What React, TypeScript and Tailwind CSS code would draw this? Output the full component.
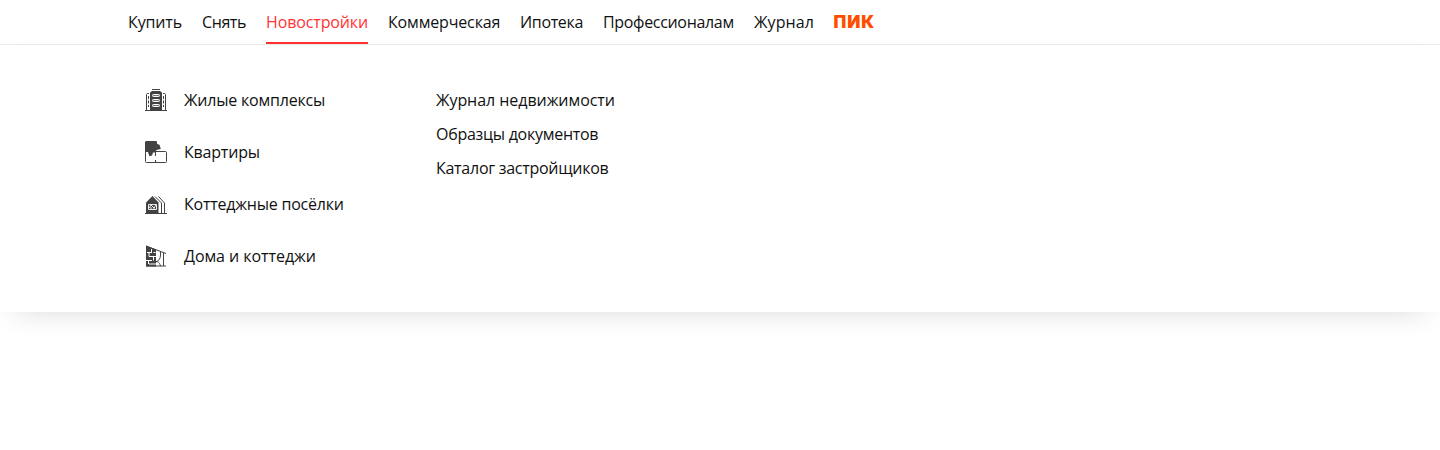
import type { ReactNode } from 'react';

const icon = 'block h-6 w-6 shrink-0';

const ComplexIcon = () => (
  <svg className={icon} viewBox="0 0 24 24" fill="none" stroke="#424242">
    <path d="M8 1.5h8" />
    <path d="M6 22V4.500l2-1.500h8l2 1.500V22z" fill="#424242" stroke="none" />
    <path d="M1 22.500h22M2.500 22V6.500q0-1 1-1H5M21.500 22V6.500q0-1-1-1H19" />
    <path d="M4.500 8v11M19.500 8v11" strokeDasharray="3 1.5" />
    <g stroke="#fff" fill="#777">
      <rect x="8.500" y="6.500" width="7" height="2" rx="0.8" />
      <rect x="8.500" y="11.500" width="7" height="2" rx="0.8" />
      <rect x="8.500" y="16.500" width="7" height="2" rx="0.8" />
    </g>
  </svg>
);

const FlatIcon = () => (
  <svg className={icon} viewBox="0 0 24 24" fill="none" stroke="#424242">
    <path d="M2 1h10.700l.5 3 2.300.7 1.300 4.300-4.300 1-1.500 2.500H9l-1 3-2.700.7L4 12H1V2z" fill="#424242" stroke="none" />
    <path d="M1.500 11v10.500q0 1 1 1h19q1 0 1-1v-9q0-1-1-1H11M11.500 12v4M11.500 20v2" />
  </svg>
);

const VillageIcon = () => (
  <svg className={icon} viewBox="0 0 24 24" fill="none" stroke="#424242">
    <path d="M2 21V10.500L8.500 4l6 6.500V21z" fill="#424242" stroke="none" />
    <path d="M1 21.500h22M11 4.500l6.500 6.500v10M14.500 4.500l6 6.500v10" />
    <path d="M4.500 12.500h8v5h-8zM5 16l2-3 3 3 2-3M7 17.500V15M10 17.500V15" stroke="#fff" strokeWidth="0.9" />
  </svg>
);

const HouseIcon = () => (
  <svg className={icon} viewBox="0 0 24 24" fill="none" stroke="#424242">
    <path d="M2 1.500l10 4V22.500H2z" fill="#424242" stroke="none" />
    <path d="M2 2l20 7.500M19.500 9v13M2 22h20M16.500 8v3c0 4-2 6-5 7 2-1 4 0 5 4" />
    <path d="M3 8.500h5M5 12.500h7M2 16.500h6M5 20h7M7.500 5v3.500M9.500 8.500h2M5 9v3.500M9.500 12.500v4M4.500 17v3" stroke="#fff" />
  </svg>
);

const nav: [string, string][] = [
  ['Купить', 'w-[54px] tracking-[-0.13px]'],
  ['Снять', 'w-[44px] tracking-[-0.4px]'],
  ['Новостройки', 'w-[102px] tracking-[-0.13px]'],
  ['Коммерческая', 'w-[112px] tracking-[-0.15px]'],
  ['Ипотека', 'w-[63px] tracking-[-0.35px]'],
  ['Профессионалам', 'w-[131px] tracking-[-0.33px]'],
  ['Журнал', 'w-[60px] tracking-[0.08px]'],
];

const sections: [string, string, ReactNode][] = [
  ['Жилые комплексы', 'tracking-[-0.2px]', <ComplexIcon />],
  ['Квартиры', 'tracking-[-0.2px]', <FlatIcon />],
  ['Коттеджные посёлки', 'tracking-[-0.22px]', <VillageIcon />],
  ['Дома и коттеджи', 'tracking-[-0.06px]', <HouseIcon />],
];

const links: [string, string][] = [
  ['Журнал недвижимости', 'tracking-[-0.05px]'],
  ['Образцы документов', 'tracking-[-0.27px]'],
  ['Каталог застройщиков', 'tracking-[-0.27px]'],
];

export default function App() {
  return (
    <div className="min-h-[450px] overflow-x-hidden bg-white font-['Open_Sans','Noto_Sans',sans-serif] text-base text-[#111]">
      <nav className="flex h-[45px] gap-5 border-b border-[#ebebeb] pl-32 leading-[44px] whitespace-nowrap">
        {nav.map(([label, size]) => (
          <a
            key={label}
            className={`block h-11 ${size} ${label === 'Новостройки' ? 'border-b-2 border-[#f33] text-[#f33]' : ''}`}
          >
            {label}
          </a>
        ))}
        <a className="-ml-[0.5px] block h-11 font-['Inter',sans-serif] text-[17px] font-black tracking-[0.9px] text-[#ff4d00]">ПИК</a>
      </nav>
      <div className="flex h-[267px] pt-[29px] pl-36 shadow-[0_10px_30px_-15px_rgba(0,0,0,0.2)]">
        <ul className="w-[292px]">
          {sections.map(([label, size, drawing]) => (
            <li key={label} className={`flex h-13 items-center gap-4 ${size}`}>
              {drawing}
              {label}
            </li>
          ))}
        </ul>
        <ul className="pt-[9px]">
          {links.map(([label, size]) => (
            <li key={label} className={`h-[34px] leading-[34px] ${size}`}>{label}</li>
          ))}
        </ul>
      </div>
    </div>
  );
}
